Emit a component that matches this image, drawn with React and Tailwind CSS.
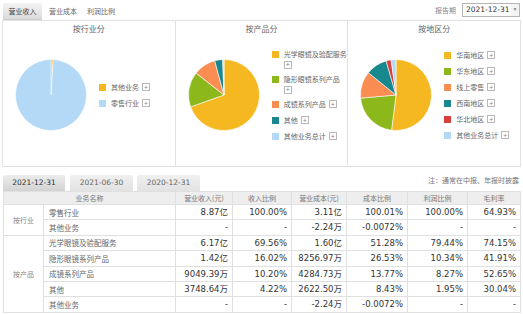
import React from 'react';

const YELLOW = '#f6b820';
const GREEN = '#8cb81c';
const ORANGE = '#f98d52';
const TEAL = '#17898e';
const RED = '#d8403b';
const SKY = '#b4d9f6';

const cjk = { fontFamily: '"Noto Sans CJK SC", sans-serif' };
const num = { fontFamily: '"DejaVu Sans", "Noto Sans CJK SC", sans-serif' };

const charts = [
  {
    title: '按行业分',
    slices: [
      { name: '其他业务', value: 1, color: YELLOW },
      { name: '零售行业', value: 99, color: SKY },
    ],
  },
  {
    title: '按产品分',
    slices: [
      { name: '光学眼镜及验配服务', value: 69.56, color: YELLOW },
      { name: '隐形眼镜系列产品', value: 16.02, color: GREEN },
      { name: '成镜系列产品', value: 10.2, color: ORANGE },
      { name: '其他', value: 3.62, color: TEAL },
      { name: '其他业务总计', value: 0.6, color: SKY },
    ],
  },
  {
    title: '按地区分',
    slices: [
      { name: '华南地区', value: 52, color: YELLOW },
      { name: '华东地区', value: 21.6, color: GREEN },
      { name: '线上零售', value: 12.2, color: ORANGE },
      { name: '西南地区', value: 9.7, color: TEAL },
      { name: '华北地区', value: 2.3, color: RED },
      { name: '其他业务总计', value: 2.2, color: SKY },
    ],
  },
];

const rows = [
  { group: '按行业', span: 2, name: '零售行业', cells: ['8.87亿', '100.00%', '3.11亿', '100.01%', '100.00%', '64.93%'] },
  { name: '其他业务', cells: ['-', '-', '-2.24万', '-0.0072%', '-', '-'] },
  { group: '按产品', span: 5, name: '光学眼镜及验配服务', cells: ['6.17亿', '69.56%', '1.60亿', '51.28%', '79.44%', '74.15%'] },
  { name: '隐形眼镜系列产品', cells: ['1.42亿', '16.02%', '8256.97万', '26.53%', '10.34%', '41.91%'] },
  { name: '成镜系列产品', cells: ['9049.39万', '10.20%', '4284.73万', '13.77%', '8.27%', '52.65%'] },
  { name: '其他', cells: ['3748.64万', '4.22%', '2622.50万', '8.43%', '1.95%', '30.04%'] },
  { name: '其他业务', cells: ['-', '-', '-2.24万', '-0.0072%', '-', '-'] },
];

const headers = ['营业收入(元)', '收入比例', '营业成本(元)', '成本比例', '利润比例', '毛利率'];
const widths = ['w-[57px]', 'w-[59px]', 'w-[55px]', 'w-[61px]', 'w-[60px]', 'w-[53px]'];

function Pie({ slices }) {
  const r = 35.5;
  const c = 36;
  const total = slices.reduce((s, d) => s + d.value, 0);
  let acc = 0;
  const point = (t) => {
    const a = t * Math.PI * 2 - Math.PI / 2;
    return [c + r * Math.cos(a), c + r * Math.sin(a)];
  };
  return (
    <svg width="72" height="72" viewBox="0 0 72 72" className="shrink-0">
      {slices.map((s) => {
        const t0 = acc / total;
        acc += s.value;
        const t1 = acc / total;
        const [x0, y0] = point(t0);
        const [x1, y1] = point(t1);
        const large = t1 - t0 > 0.5 ? 1 : 0;
        return (
          <path
            key={s.name}
            d={`M${c} ${c} L${x0} ${y0} A${r} ${r} 0 ${large} 1 ${x1} ${y1} Z`}
            fill={s.color}
            stroke="#fff"
            strokeWidth="0.6"
          />
        );
      })}
    </svg>
  );
}

function PlusBox() {
  return (
    <span className="flex items-center justify-center w-[8px] h-[8px] border border-[#b8b8b8] bg-white text-[#888] text-[7px] leading-none">
      +
    </span>
  );
}

function ChartPanel({ title, slices, last }) {
  return (
    <div className={`flex-1 flex flex-col ${last ? '' : 'border-r border-[#e2e2e2]'}`}>
      <div className="h-[15px] text-center text-[8px] leading-[15px] text-[#666]" style={cjk}>
        {title}
      </div>
      <div className="flex-1 flex items-center pl-[12px] pb-[12px] gap-[12px]">
        <Pie slices={slices} />
        <div className="flex flex-col gap-[5px]">
          {slices.map((s) => (
            <div key={s.name} className="flex items-start gap-[5px]">
              <span className="w-[7px] h-[7px] mt-[2px] shrink-0" style={{ background: s.color }} />
              <div className="w-[61px] flex flex-wrap items-center gap-x-[3px] gap-y-[1px]">
                <span className="whitespace-nowrap text-[7px] leading-[11px] text-[#666]" style={cjk}>
                  {s.name}
                </span>
                <PlusBox />
              </div>
            </div>
          ))}
        </div>
      </div>
    </div>
  );
}

export default function App() {
  return (
    <div className="w-[523px] h-[314px] bg-white overflow-hidden">
      {/* top tabs + report period */}
      <div className="h-[20px] flex items-start">
        <div
          className="ml-[3px] mt-[3px] w-[39px] h-[17px] text-center text-[7px] leading-[16px] text-[#444] bg-gradient-to-b from-[#f4f4f4] to-[#dadada] border-b border-[#ccc]"
          style={cjk}
        >
          营业收入
        </div>
        <div className="ml-[7px] mt-[3px] text-[7px] leading-[16px] text-[#666]" style={cjk}>营业成本</div>
        <div className="ml-[10px] mt-[3px] text-[7px] leading-[16px] text-[#666]" style={cjk}>利润比例</div>
        <div className="ml-auto mt-[3px] mr-[6px] text-[7px] leading-[14px] text-[#888]" style={cjk}>报告期</div>
        <div className="mt-[3px] mr-[3px] w-[58px] h-[14px] border border-[#b5b5b5] flex items-center">
          <span className="pl-[3px] flex-1 text-[7.5px] text-[#333]" style={num}>2021-12-31</span>
          <span className="w-[8px] h-full flex items-center justify-center text-[5px] text-[#888] bg-[#f4f4f4]">▼</span>
        </div>
      </div>

      {/* three pie panels */}
      <div className="mx-[2px] h-[147px] flex border border-[#e2e2e2]">
        {charts.map((ch, i) => (
          <ChartPanel key={ch.title} title={ch.title} slices={ch.slices} last={i === charts.length - 1} />
        ))}
      </div>

      {/* period tabs */}
      <div className="mt-[7px] mx-[3px] h-[17px] flex items-end">
        <div className="w-[62px] h-[16px] rounded-t-[2px] text-center text-[7.5px] leading-[16px] text-[#333] bg-gradient-to-b from-[#ececec] to-[#d3d3d3]" style={num}>
          2021-12-31
        </div>
        <div className="ml-[5px] w-[63px] h-[16px] rounded-t-[2px] text-center text-[7.5px] leading-[16px] text-[#666] bg-gradient-to-b from-[#f0f0f0] to-[#e2e2e2]" style={num}>
          2021-06-30
        </div>
        <div className="ml-[4px] w-[63px] h-[16px] rounded-t-[2px] text-center text-[7.5px] leading-[16px] text-[#666] bg-gradient-to-b from-[#f0f0f0] to-[#e2e2e2]" style={num}>
          2020-12-31
        </div>
        <div className="ml-auto mr-[1px] self-start text-[7px] leading-[12px] text-[#777]" style={cjk}>
          注：通常在中报、年报时披露
        </div>
      </div>

      {/* detail table */}
      <table className="ml-[3px] w-[517px] border-collapse table-fixed">
        <colgroup>
          <col className="w-[40px]" />
          <col className="w-[132px]" />
          {widths.map((w, i) => (
            <col key={i} className={w} />
          ))}
        </colgroup>
        <thead>
          <tr className="h-[13px] bg-[#eeeeee]">
            <th colSpan={2} className="border border-[#e0e0e0] text-[7px] font-normal text-[#777] p-0" style={cjk}>
              业务名称
            </th>
            {headers.map((h) => (
              <th key={h} className="border border-[#e0e0e0] text-[7px] font-normal text-[#777] p-0" style={cjk}>
                {h}
              </th>
            ))}
          </tr>
        </thead>
        <tbody>
          {rows.map((r, i) => (
            <tr key={i} className="h-[15.4px]">
              {r.group && (
                <td rowSpan={r.span} className="border border-[#e0e0e0] text-center text-[7px] text-[#888] p-0" style={cjk}>
                  {r.group}
                </td>
              )}
              <td className="border border-[#e0e0e0] pl-[5px] text-[7.5px] text-[#666] p-0" style={cjk}>
                {r.name}
              </td>
              {r.cells.map((v, j) => (
                <td key={j} className="border border-[#e0e0e0] text-right pr-[4px] text-[8.5px] text-[#333] p-0 leading-none" style={num}>
                  {v}
                </td>
              ))}
            </tr>
          ))}
        </tbody>
      </table>
    </div>
  );
}
